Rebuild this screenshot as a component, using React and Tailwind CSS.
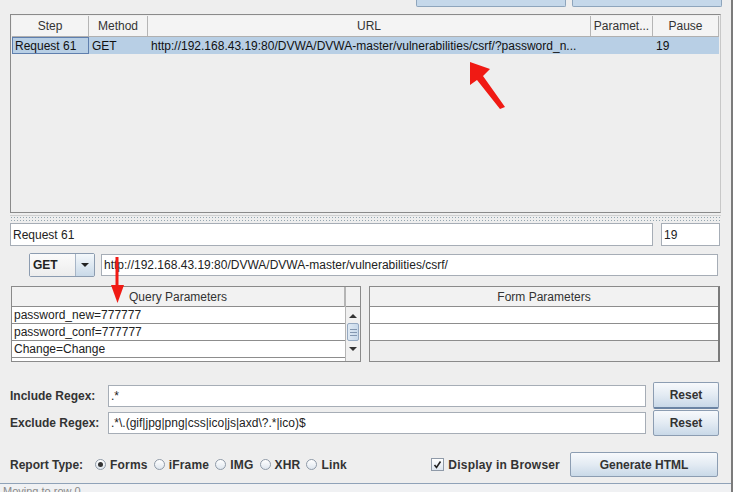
import React from 'react';

const HeadCell = ({ w, children, last }) => (
  <div
    className={`h-full flex items-center justify-center text-[#333] bg-[#f4f4f4] ${last ? '' : 'border-r border-[#b5b5b5]'} ${w}`}
  >
    {children}
  </div>
);

const Field = ({ w, children, h = 'h-[22px]' }) => (
  <div className={`${w} ${h} bg-white border border-[#a6adb6] pl-[2px] flex items-center whitespace-nowrap overflow-hidden text-[#222]`}>
    {children}
  </div>
);

const BlueButton = ({ w, h, children, focus }) => (
  <div
    className={`${w} ${h} flex items-center justify-center font-bold text-[#333] rounded-[2px] border border-[#8c9db2] bg-gradient-to-b from-[#f7f9fc] via-[#e3ebf3] to-[#c9d9e8] ${focus ? 'border-b-2 border-b-[#6b84a3]' : ''}`}
  >
    {children}
  </div>
);

const Radio = ({ checked, label }) => (
  <div className="flex items-center gap-[4px]">
    <div className="w-[11px] h-[11px] rounded-full border border-[#8f9aa8] bg-gradient-to-b from-[#ffffff] to-[#dfe6ee] flex items-center justify-center">
      {checked && <div className="w-[5px] h-[5px] rounded-full bg-[#333]" />}
    </div>
    <span className="font-bold text-[#333] tracking-[0.2px]">{label}</span>
  </div>
);

const ParamRow = ({ children }) => (
  <div className="h-[17px] shrink-0 bg-white border-b border-[#8d8d8d] pl-[2px] flex items-center whitespace-nowrap overflow-hidden text-[#222]">
    {children}
  </div>
);

export default function App() {
  return (
    <div className="relative w-[733px] h-[492px] overflow-hidden bg-[#eeeeee] border-r-2 border-[#7b7b7b] font-['Liberation_Sans',Arial,sans-serif] text-[12px] text-[#222]">
      {/* top buttons (cut off) */}
      <div className="flex h-[7px] gap-[6px] pl-[416px]">
        <div className="w-[150px] h-full bg-[#c5d8ea] border-x border-b border-[#8ea5bc] rounded-b-[2px]" />
        <div className="w-[150px] h-full bg-[#c5d8ea] border-x border-b border-[#8ea5bc] rounded-b-[2px]" />
      </div>

      {/* steps table */}
      <div className="mt-[7px] ml-[10px] w-[711px] h-[199px] border border-[#8a8a8a] border-r-[#c8c8c8] bg-[#eeeeee] p-[1px]">
        <div className="flex h-[21px] border-b border-[#b0b0b0]">
          <HeadCell w="w-[77px]">Step</HeadCell>
          <HeadCell w="w-[59px]">Method</HeadCell>
          <HeadCell w="w-[443px]">URL</HeadCell>
          <HeadCell w="w-[62px]">Paramet...</HeadCell>
          <HeadCell w="w-[66px]">Pause</HeadCell>
        </div>
        <div className="flex h-[17px] bg-[#b8cfe5] text-[#111] w-[707px]">
          <div className="w-[77px] border border-[#5f7fae] pl-[2px] flex items-center">Request 61</div>
          <div className="w-[59px] pl-[3px] flex items-center">GET</div>
          <div className="w-[443px] pl-[3px] flex items-center whitespace-nowrap overflow-hidden">
            http://192.168.43.19:80/DVWA/DVWA-master/vulnerabilities/csrf/?password_n...
          </div>
          <div className="w-[62px]" />
          <div className="w-[66px] pl-[3px] flex items-center">19</div>
        </div>
      </div>

      {/* splitter */}
      <div className="mt-[2px] ml-[10px] w-[711px] h-[6px] border-t border-[#d0d0d0] bg-[radial-gradient(circle,#94a6b0_0.7px,transparent_1px)] bg-[length:3px_3px]" />

      {/* request name */}
      <div className="mt-[2px] ml-[10px] flex gap-[8px]">
        <Field w="w-[643px]" h="h-[23px]">Request 61</Field>
        <Field w="w-[59px]" h="h-[23px]">19</Field>
      </div>

      {/* method + url */}
      <div className="mt-[7px] ml-[29px] flex items-center gap-[6px]">
        <div className="w-[66px] h-[24px] flex border border-[#8c9cb0] rounded-[2px]">
          <div className="flex-1 flex items-center pl-[3px] font-bold text-[#222] bg-gradient-to-b from-[#fbfbfb] to-[#ededed]">GET</div>
          <div className="w-[19px] flex items-center justify-center border-l border-[#a7b5c6] bg-gradient-to-b from-[#f4f8fb] to-[#c9d9e8]">
            <div className="w-0 h-0 border-l-[4px] border-r-[4px] border-t-[4px] border-l-transparent border-r-transparent border-t-[#222]" />
          </div>
        </div>
        <Field w="w-[617px]">http://192.168.43.19:80/DVWA/DVWA-master/vulnerabilities/csrf/</Field>
      </div>

      {/* parameter tables */}
      <div className="mt-[9px] ml-[11px] flex gap-[8px]">
        <div className="w-[350px] h-[76px] border border-[#8a8a8a] flex">
          <div className="flex-1 flex flex-col overflow-hidden">
            <div className="h-[20px] flex items-center justify-center border-b border-[#8d8d8d] border-r border-r-[#b5b5b5] bg-[#f2f2f2] text-[#333] shrink-0">
              Query Parameters
            </div>
            <ParamRow>password_new=777777</ParamRow>
            <ParamRow>password_conf=777777</ParamRow>
            <ParamRow>Change=Change</ParamRow>
            <div className="h-[17px] shrink-0 bg-white pl-[2px] whitespace-nowrap overflow-hidden leading-[17px] text-[#222]">
              user_token=364b79b155a248d7a887669f7397b9
            </div>
          </div>
          <div className="w-[15px] flex flex-col border-l border-[#b5b5b5] bg-[#f0f0f0]">
            <div className="h-[20px] shrink-0 border-b border-[#8d8d8d] bg-[#f2f2f2]" />
            <div className="h-[14px] shrink-0 flex items-center justify-center mt-[2px]">
              <div className="w-0 h-0 border-l-[4px] border-r-[4px] border-b-[4px] border-l-transparent border-r-transparent border-b-[#333]" />
            </div>
            <div className="mx-[1px] h-[18px] shrink-0 rounded-[2px] border border-[#95a9c1] bg-gradient-to-r from-[#dfe9f3] to-[#c8d9ea] flex flex-col items-center justify-center gap-[2px]">
              <div className="w-[7px] h-px bg-[#8397b0]" />
              <div className="w-[7px] h-px bg-[#8397b0]" />
              <div className="w-[7px] h-px bg-[#8397b0]" />
            </div>
            <div className="h-[16px] shrink-0 flex items-center justify-center">
              <div className="w-0 h-0 border-l-[4px] border-r-[4px] border-t-[4px] border-l-transparent border-r-transparent border-t-[#333]" />
            </div>
          </div>
        </div>
        <div className="w-[351px] h-[76px] border border-[#8a8a8a] border-r-[#7a7a7a] border-r-2 flex flex-col">
          <div className="h-[20px] shrink-0 flex items-center justify-center border-b border-[#8d8d8d] bg-[#f2f2f2] text-[#333]">
            Form Parameters
          </div>
          <div className="h-[17px] shrink-0 bg-white border-b border-[#8d8d8d]" />
          <div className="h-[17px] shrink-0 bg-white border-b border-[#8d8d8d]" />
        </div>
      </div>

      {/* regex rows */}
      <div className="mt-[20px] ml-[10px] flex items-center">
        <div className="w-[98px] font-bold text-[#333]">Include Regex:</div>
        <Field w="w-[538px]">.*</Field>
        <div className="ml-[7px]">
          <BlueButton w="w-[66px]" h="h-[27px]" focus>Reset</BlueButton>
        </div>
      </div>
      <div className="mt-[1px] ml-[10px] flex items-center">
        <div className="w-[98px] font-bold text-[#333]">Exclude Regex:</div>
        <Field w="w-[538px]">.*\.(gif|jpg|png|css|ico|js|axd\?.*|ico)$</Field>
        <div className="ml-[7px]">
          <BlueButton w="w-[66px]" h="h-[26px]">Reset</BlueButton>
        </div>
      </div>

      {/* report row */}
      <div className="mt-[16px] ml-[10px] flex items-center h-[25px]">
        <div className="w-[85px] font-bold text-[#333]">Report Type:</div>
        <div className="flex items-center gap-[6px]">
          <Radio checked label="Forms" />
          <Radio label="iFrame" />
          <Radio label="IMG" />
          <Radio label="XHR" />
          <Radio label="Link" />
        </div>
        <div className="ml-auto flex items-center gap-[4px] mr-[13px]">
          <div className="w-[13px] h-[13px] border border-[#8f9aa8] bg-gradient-to-b from-white to-[#dde5ee] flex items-center justify-center">
            <svg width="9" height="9" viewBox="0 0 9 9">
              <path d="M1.5 5 L3.5 7.5 L7.5 1.5" stroke="#222" strokeWidth="1.6" fill="none" />
            </svg>
          </div>
          <span className="font-bold text-[#333] tracking-[0.2px]">Display in Browser</span>
          <div className="ml-[6px]">
            <BlueButton w="w-[148px]" h="h-[25px]">Generate HTML</BlueButton>
          </div>
        </div>
      </div>

      {/* status bar */}
      <div className="mt-[6px] border-t border-[#8fa2b8] bg-[#f0f1f3] h-[20px] pl-[3px] text-[11px] text-[#8a8a8a] leading-[14px]">
        Moving to row 0
      </div>

      {/* annotation arrows */}
      <svg className="absolute left-0 top-0 pointer-events-none" width="733" height="492">
        <polygon points="470,62 490,69 483,76 505,107 500,109 477,80 470,85" fill="#f01a14" />
        <rect x="115.5" y="257" width="3" height="30" fill="#f01a14" />
        <polygon points="111,285 124,285 117.5,303" fill="#f01a14" />
      </svg>
    </div>
  );
}
